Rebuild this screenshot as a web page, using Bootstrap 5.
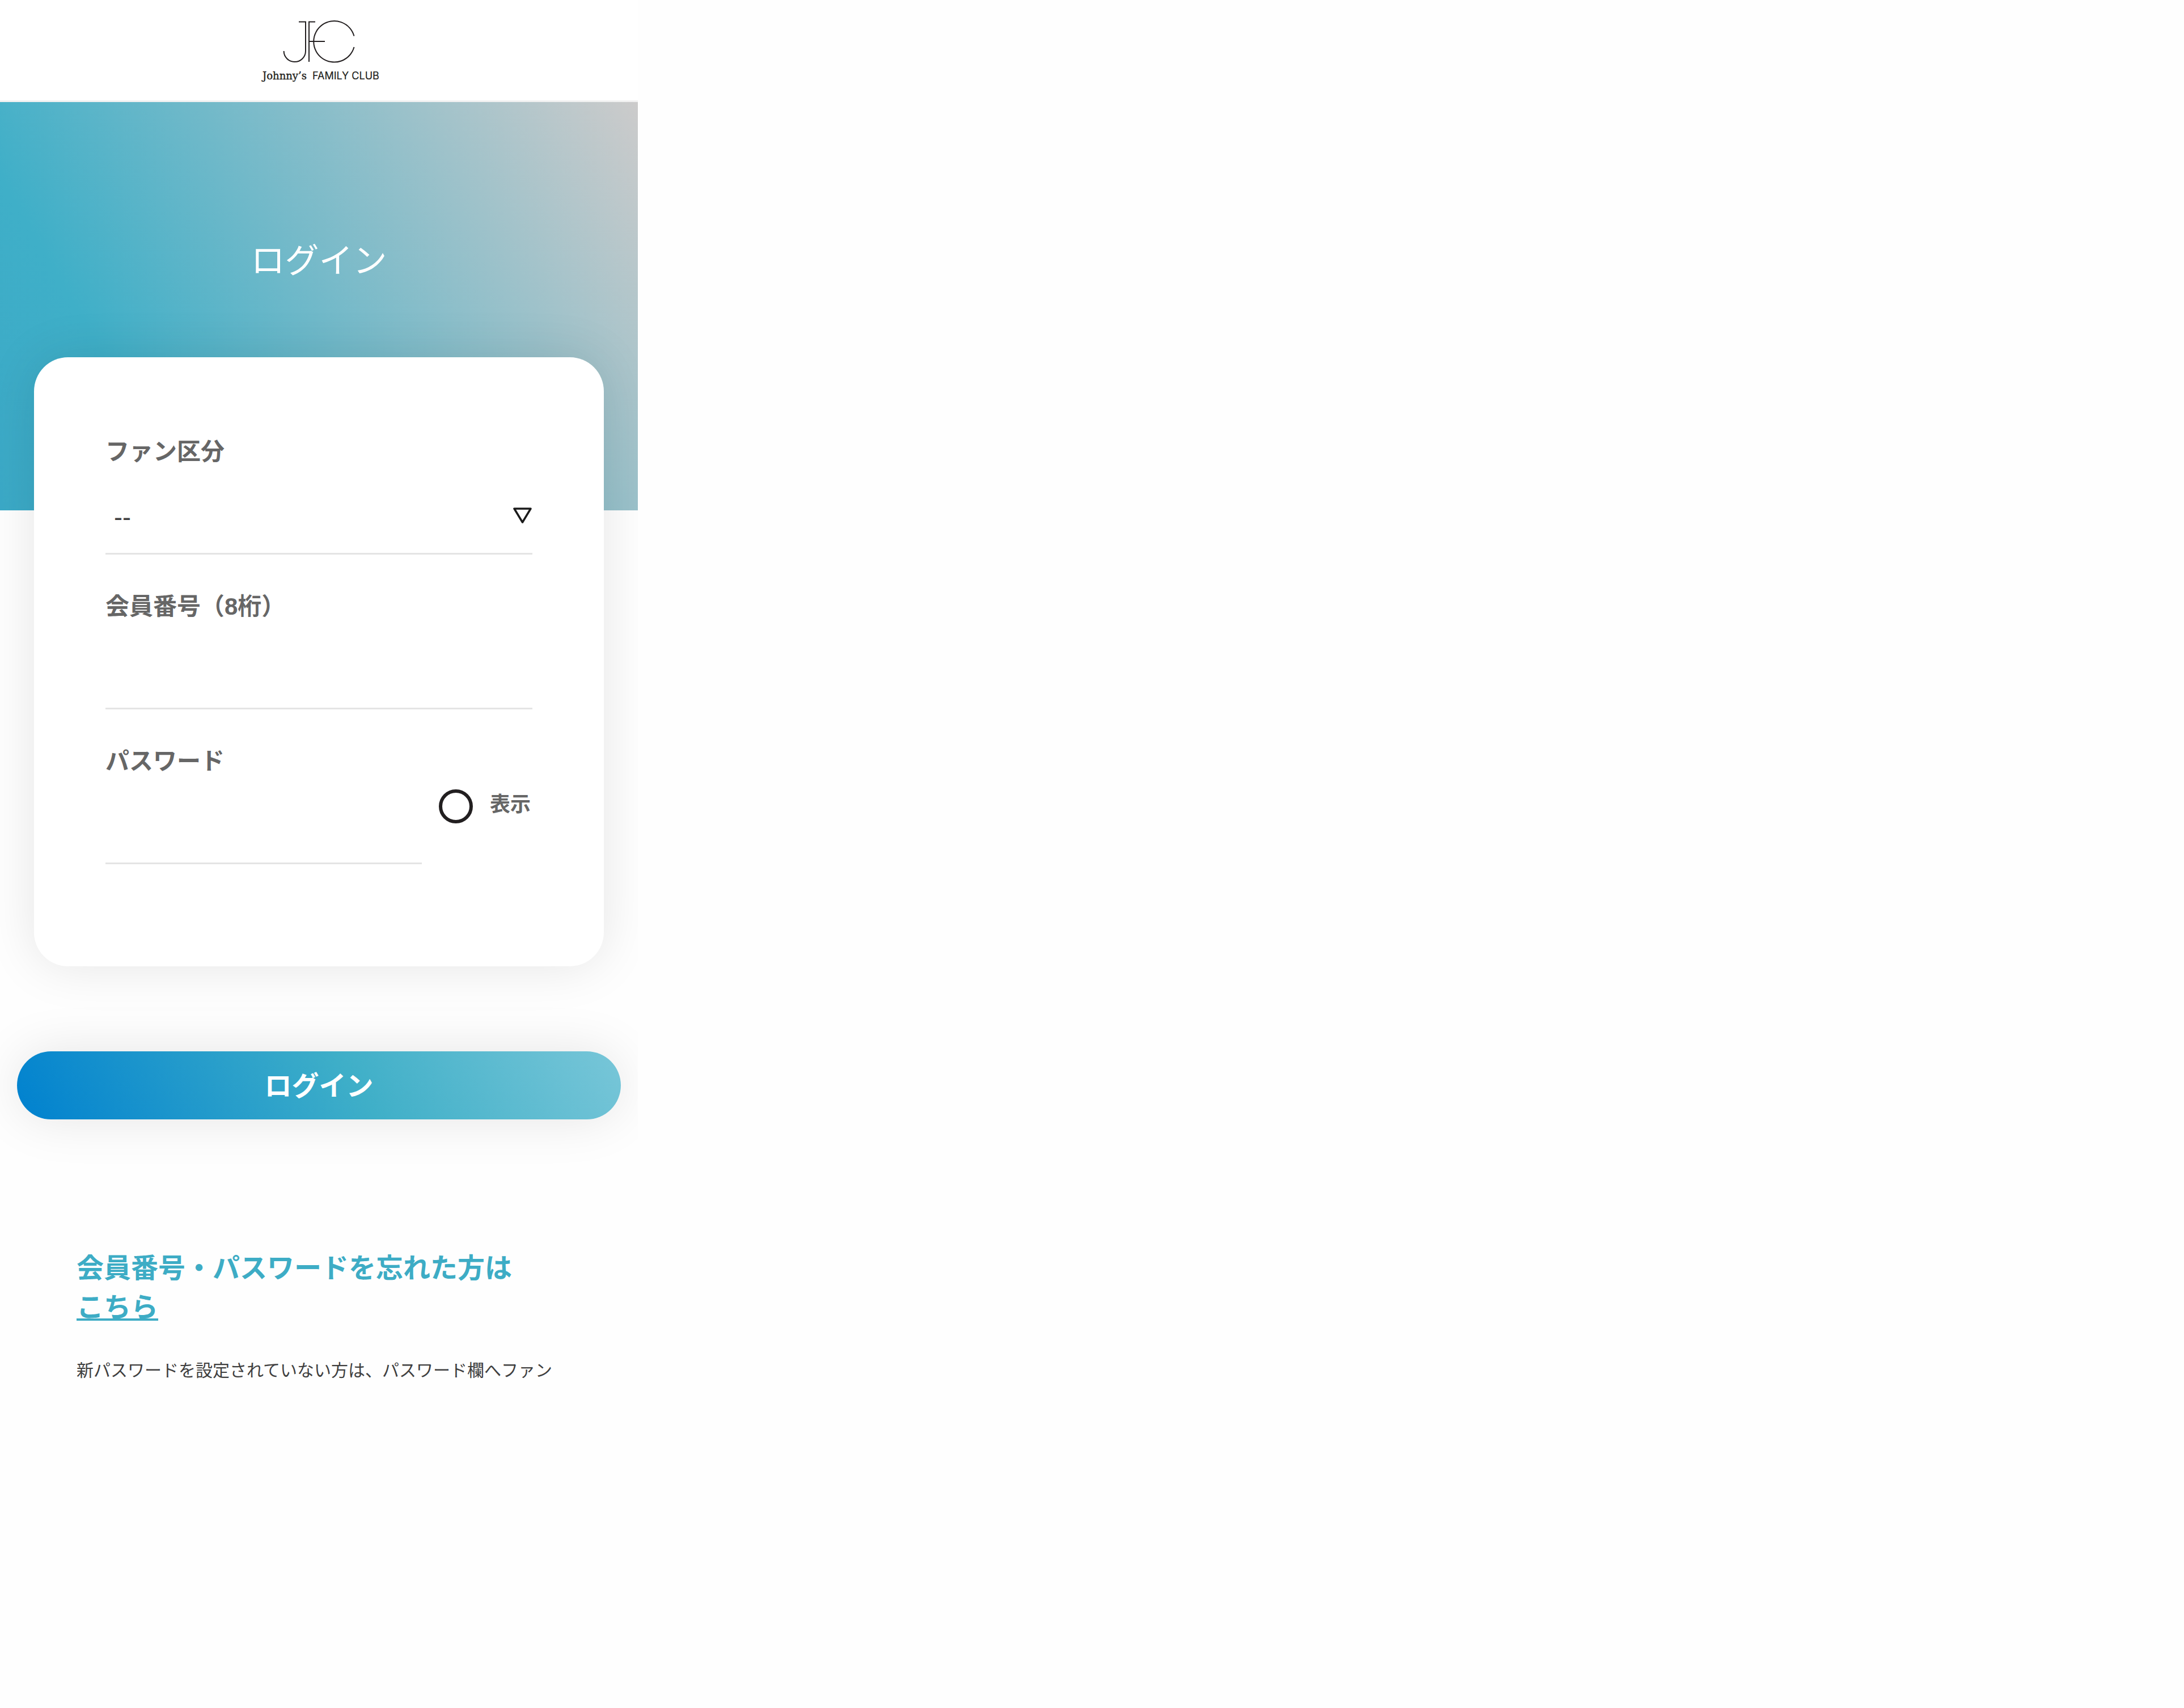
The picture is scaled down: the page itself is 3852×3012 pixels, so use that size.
<!DOCTYPE html>
<html lang="ja">
<head>
<meta charset="utf-8">
<meta name="viewport" content="width=device-width, initial-scale=1">
<title>ログイン | Johnny's FAMILY CLUB</title>
<link href="https://cdn.jsdelivr.net/npm/bootstrap@5.3.0/dist/css/bootstrap.min.css" rel="stylesheet">
<style>
body { font-family: "Liberation Sans", "Noto Sans CJK JP", sans-serif; color: #3e3e3e; background: #fefefe; }
.page-col { max-width: 1125px; overflow: hidden; }
.site-head { height: 180px; padding-top: 32px; border-bottom: 3px solid #f0f0f0; }
.site-logo { width: 210px; height: 114px; }
.hero { height: 720px; padding-top: 236px; background: linear-gradient(60deg, #3ba9c7 0%, #3fafc8 22%, #cccbcb 100%); }
.hero h1 { font-size: 60px; line-height: 90px; font-weight: 400; }
.login-card { margin: -270px 60px 0; padding: 123px 126px 180px; border-radius: 60px; background: #fff; box-shadow: 0 0 90px rgba(0,0,0,.1); }
.field { margin-bottom: 48px; }
.field:last-child { margin-bottom: 0; }
.field-label { padding-top: 4px; font-size: 42px; line-height: 80px; font-weight: 700; color: #666; margin: 0; }
.line-input { height: 141px; border: 0; border-bottom: 3px solid #e4e4e4; border-radius: 0; background-color: transparent; font-size: 45px; color: #3e3e3e; box-shadow: none; }
.line-select { padding: 12px 60px 0 15px; background: url("data:image/svg+xml,%3Csvg xmlns='http://www.w3.org/2000/svg' viewBox='0 0 34 30'%3E%3Cpath d='M2 3h29L16.500 27z' fill='none' stroke='%231a1a1a' stroke-width='3.500' stroke-linejoin='round'/%3E%3C/svg%3E") no-repeat right 0 top 57px / 34px 30px; }
.pass-input { flex: 0 0 558px; }
.show-row { gap: 30px; padding: 9px 3px 0 0; }
.show-check.form-check-input { width: 60px; height: 60px; margin: 0; border: 6px solid #221f20; border-radius: 50%; background-color: transparent; }
.show-label { font-size: 36px; line-height: 54px; font-weight: 700; color: #666; }
.btn-login { height: 120px; padding: 4px 0 0; border: 0; border-radius: 60px; font-size: 48px; font-weight: 700; color: #fff; background: linear-gradient(60deg, #0081cf 0%, #3fafc8 56%, #78c6d8 100%); box-shadow: 0 0 90px rgba(0,0,0,.1); }
.btn-area { padding: 150px 30px 0; }
.help { padding: 228px 135px 0; }
.help h2 { font-size: 48px; line-height: 69px; font-weight: 700; color: #3dacc5; margin: 0; }
.help a { color: inherit; text-decoration-skip-ink: none; }
.help p { font-size: 30px; line-height: 45px; margin: 54px 0 0; }
</style>
</head>
<body>
<div class="page-col">
  <header class="site-head d-flex justify-content-center bg-white">
    <svg class="site-logo" viewBox="458 32 210 114" role="img" aria-label="Johnny's FAMILY CLUB">
      <g fill="none" stroke="#231f20" stroke-width="2">
        <path d="M527 38.500h12v51.500a19.200 19 0 0 1-38.400 0"/>
        <path d="M556 38.500h-11v70.500M545 73h28"/>
        <path d="M624.500 63.600a36.300 36.300 0 1 0 0 19.400"/>
      </g>
      <text x="463" y="140" font-family="DejaVu Serif, serif" font-size="18" fill="#231f20" stroke="#231f20" stroke-width=".4">Johnny’s</text>
      <text x="551" y="140" font-family="Inter, sans-serif" font-size="18" fill="#231f20" stroke="#231f20" stroke-width=".2">FAMILY CLUB</text>
    </svg>
  </header>
  <main>
    <div class="hero text-center text-white"><h1 class="m-0">ログイン</h1></div>
    <form>
      <div class="login-card position-relative">
        <div class="field">
          <label class="field-label d-block" for="fan">ファン区分</label>
          <select class="form-select line-input line-select" id="fan"><option>--</option></select>
        </div>
        <div class="field">
          <label class="field-label d-block" for="member">会員番号（8桁）</label>
          <input class="form-control line-input" id="member" type="text" inputmode="numeric" maxlength="8">
        </div>
        <div class="field">
          <label class="field-label d-block" for="pass">パスワード</label>
          <div class="d-flex justify-content-between align-items-start">
            <input class="form-control line-input pass-input" id="pass" type="password">
            <div class="show-row d-flex align-items-start">
              <input class="form-check-input show-check" type="checkbox" id="show">
              <label class="show-label" for="show">表示</label>
            </div>
          </div>
        </div>
      </div>
      <div class="btn-area"><button class="btn btn-login w-100" type="submit">ログイン</button></div>
    </form>
    <section class="help">
      <h2>会員番号・パスワードを忘れた方は<br><a href="#">こちら</a></h2>
      <p>新パスワードを設定されていない方は、パスワード欄へファン</p>
    </section>
  </main>
</div>
<script src="https://cdn.jsdelivr.net/npm/bootstrap@5.3.0/dist/js/bootstrap.bundle.min.js"></script>
</body>
</html>
